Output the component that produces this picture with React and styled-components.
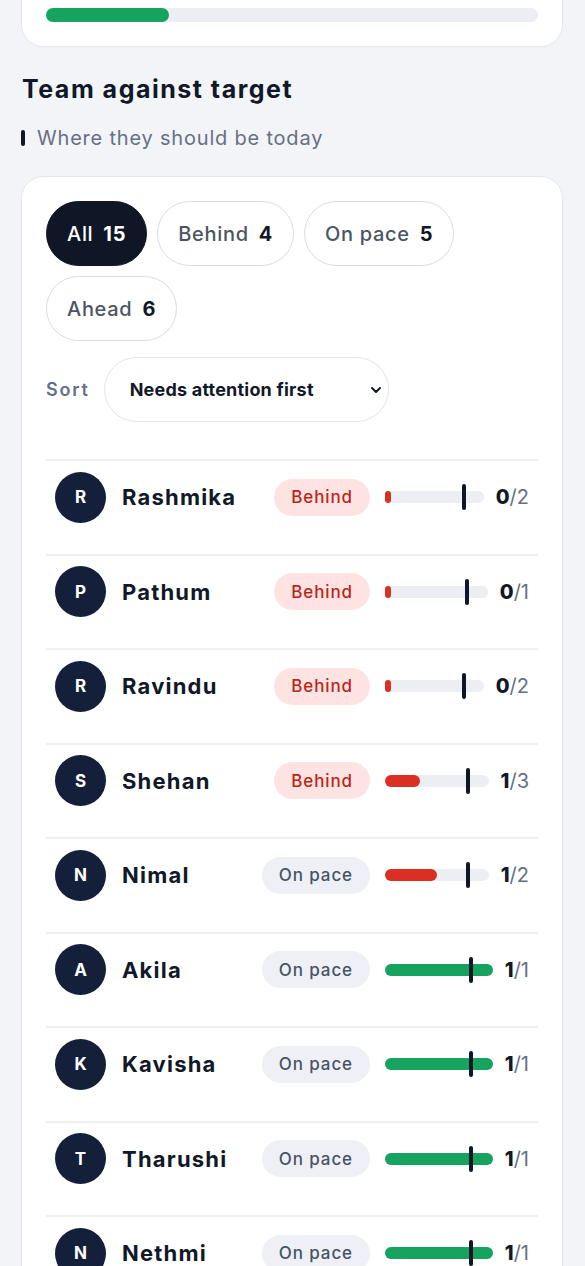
import React from 'react';
import styled, { createGlobalStyle } from 'styled-components';
import { ChevronDown } from 'lucide-react';

const GlobalStyle = createGlobalStyle`
  html, body {
    margin: 0;
    padding: 0;
    background: #f2f4f8;
    font-family: Inter, "Noto Sans", sans-serif;
    color: #0f172a;
  }
  * { box-sizing: border-box; }
`;

const team = [
  { name: 'Rashmika', status: 'behind', done: 0, target: 2 },
  { name: 'Pathum', status: 'behind', done: 0, target: 1 },
  { name: 'Ravindu', status: 'behind', done: 0, target: 2 },
  { name: 'Shehan', status: 'behind', done: 1, target: 3 },
  { name: 'Nimal', status: 'pace', done: 1, target: 2 },
  { name: 'Akila', status: 'pace', done: 1, target: 1 },
  { name: 'Kavisha', status: 'pace', done: 1, target: 1 },
  { name: 'Tharushi', status: 'pace', done: 1, target: 1 },
  { name: 'Nethmi', status: 'pace', done: 1, target: 1 },
];

const filters = [
  { label: 'All', count: 15, active: true },
  { label: 'Behind', count: 4 },
  { label: 'On pace', count: 5 },
  { label: 'Ahead', count: 6 },
];

const Page = styled.div`
  padding: 0 22px 40px 21px;
  overflow: hidden;
  height: 1266px;
`;

const Card = styled.section`
  background: #fff;
  border: 1px solid #e3e6ee;
  border-radius: 22px;
`;

const SummaryCard = styled(Card)`
  margin-top: -40px;
  padding: 47px 24px 24px 24px;
`;

const Track = styled.div`
  position: relative;
  height: ${p => p.h}px;
  border-radius: 999px;
  background: #eceef3;
`;

const Fill = styled.div`
  height: 100%;
  border-radius: 999px;
  background: ${p => p.color};
`;

const Heading = styled.h2`
  margin: 26px 0 0 1px;
  font-size: 25px;
  font-weight: 700;
  letter-spacing: 1.5px;
  line-height: 32px;
  color: #111827;
`;

const Sub = styled.p`
  display: flex;
  align-items: center;
  gap: 12px;
  margin: 20px 0 0 0;
  font-size: 20px;
  letter-spacing: 0.8px;
  line-height: 26px;
  color: #667085;

  &::before {
    content: '';
    width: 4px;
    height: 16px;
    border-radius: 2px;
    background: #111827;
  }
`;

const ListCard = styled(Card)`
  margin-top: 25px;
  padding: 24px 24px 0 24px;
`;

const Chips = styled.div`
  display: flex;
  flex-wrap: wrap;
  gap: 10px;
`;

const Chip = styled.button`
  display: flex;
  align-items: center;
  gap: 10px;
  height: 65px;
  padding: 0 20px;
  border-radius: 999px;
  border: 1.5px solid ${p => (p.active ? '#0f1626' : '#d9dce4')};
  background: ${p => (p.active ? '#0f1626' : '#fff')};
  color: ${p => (p.active ? '#fff' : '#4b5563')};
  font-family: inherit;
  font-size: 20px;
  font-weight: 500;
  letter-spacing: 0.7px;

  b {
    font-weight: 700;
    color: ${p => (p.active ? '#fff' : '#111827')};
  }
`;

const SortRow = styled.div`
  display: flex;
  align-items: center;
  gap: 14px;
  margin-top: 16px;
`;

const SortLabel = styled.span`
  font-size: 18px;
  font-weight: 600;
  letter-spacing: 1.8px;
  color: #667085;
`;

const SortBox = styled.div`
  display: flex;
  align-items: center;
  justify-content: space-between;
  width: 285px;
  height: 65px;
  padding: 0 4px 0 25px;
  border: 1.5px solid #e1e4ea;
  border-radius: 999px;
  font-size: 18px;
  font-weight: 700;
  letter-spacing: 0.2px;
  color: #111827;
`;

const List = styled.div`
  margin-top: 37px;
`;

const Row = styled.div`
  display: flex;
  align-items: center;
  height: 94.5px;
  padding: 0 9px 20px 9px;
  border-top: 2px solid #eef0f4;
`;

const Avatar = styled.div`
  flex: 0 0 51px;
  height: 51px;
  border-radius: 50%;
  background: #14203a;
  color: #fff;
  display: grid;
  place-items: center;
  font-size: 17px;
  font-weight: 700;
`;

const Name = styled.div`
  flex: 1;
  margin-left: 16px;
  font-size: 22px;
  font-weight: 700;
  letter-spacing: 1.2px;
  color: #111827;
`;

const Progress = styled.div`
  display: flex;
  align-items: center;
  width: 269px;
`;

const BadgeCell = styled.div`
  flex: 0 0 110px;
  display: flex;
  justify-content: flex-end;
`;

const Badge = styled.span`
  display: inline-flex;
  align-items: center;
  height: 37px;
  padding: 0 17px;
  border-radius: 999px;
  font-size: 17px;
  font-weight: 500;
  letter-spacing: 0.9px;
  background: ${p => (p.status === 'behind' ? '#fde4e2' : '#eef0f5')};
  color: ${p => (p.status === 'behind' ? '#bb2419' : '#475467')};
`;

const BarCell = styled.div`
  flex: 1;
  margin: 0 12px 0 15px;
`;

const Marker = styled.span`
  position: absolute;
  top: -7px;
  width: 4px;
  height: 26px;
  margin-left: -2px;
  border-radius: 2px;
  background: #0f1626;
`;

const Count = styled.span`
  font-size: 20px;
  color: #667085;

  b {
    font-weight: 800;
    color: #111827;
  }
`;

const labels = { behind: 'Behind', pace: 'On pace' };

function MemberRow({ member }) {
  const ratio = member.done / member.target;
  const good = ratio >= 0.8;
  return (
    <Row>
      <Avatar>{member.name[0]}</Avatar>
      <Name>{member.name}</Name>
      <Progress>
        <BadgeCell>
          <Badge status={member.status}>{labels[member.status]}</Badge>
        </BadgeCell>
        <BarCell>
          <Track h={12}>
            <Fill
              color={good ? '#16a360' : '#dc2f24'}
              style={{ width: ratio === 0 ? '6px' : `${ratio * 100}%` }}
            />
            <Marker style={{ left: '80%' }} />
          </Track>
        </BarCell>
        <Count>
          <b>{member.done}</b>/{member.target}
        </Count>
      </Progress>
    </Row>
  );
}

export default function App() {
  return (
    <>
      <GlobalStyle />
      <Page>
        <SummaryCard>
          <Track h={14}>
            <Fill color="#16a360" style={{ width: '25%' }} />
          </Track>
        </SummaryCard>

        <Heading>Team against target</Heading>
        <Sub>Where they should be today</Sub>

        <ListCard>
          <Chips>
            {filters.map(f => (
              <Chip key={f.label} active={f.active}>
                {f.label} <b>{f.count}</b>
              </Chip>
            ))}
          </Chips>
          <SortRow>
            <SortLabel>Sort</SortLabel>
            <SortBox>
              Needs attention first
              <ChevronDown size={16} strokeWidth={3} />
            </SortBox>
          </SortRow>
          <List>
            {team.map(m => (
              <MemberRow key={m.name} member={m} />
            ))}
          </List>
        </ListCard>
      </Page>
    </>
  );
}
